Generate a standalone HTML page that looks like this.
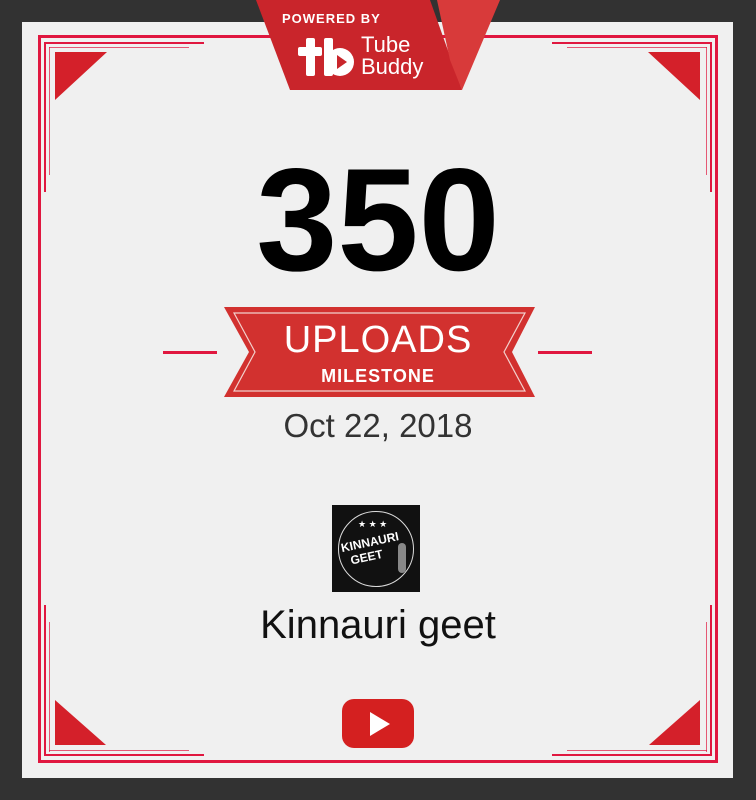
<!DOCTYPE html>
<html><head><meta charset="utf-8"><style>
body{margin:0;width:756px;height:800px;background:#323232;position:relative;overflow:hidden;font-family:"Liberation Sans",sans-serif}
.card{position:absolute;left:22px;top:22px;width:711px;height:756px;background:#f0f0f0}
.a{position:absolute;background:#e0173f}
.t{position:absolute;text-align:center;left:0;width:756px}
</style></head><body>
<div class="card"></div>
<div class="a" style="left:38px;top:35px;width:3px;height:728px"></div>
<div class="a" style="left:715px;top:35px;width:3px;height:728px"></div>
<div class="a" style="left:38px;top:35px;width:680px;height:3px"></div>
<div class="a" style="left:38px;top:760px;width:680px;height:3px"></div>
<div class="a" style="left:44px;top:42px;width:2px;height:150px"></div>
<div class="a" style="left:49px;top:47px;width:1px;height:128px;opacity:.7"></div>
<div class="a" style="left:44px;top:42px;width:160px;height:2px"></div>
<div class="a" style="left:49px;top:47px;width:140px;height:1px;opacity:.7"></div>
<div class="a" style="left:710px;top:42px;width:2px;height:150px"></div>
<div class="a" style="left:706px;top:47px;width:1px;height:128px;opacity:.7"></div>
<div class="a" style="left:552px;top:42px;width:160px;height:2px"></div>
<div class="a" style="left:567px;top:47px;width:140px;height:1px;opacity:.7"></div>
<div class="a" style="left:44px;top:605px;width:2px;height:151px"></div>
<div class="a" style="left:49px;top:622px;width:1px;height:130px;opacity:.7"></div>
<div class="a" style="left:44px;top:754px;width:160px;height:2px"></div>
<div class="a" style="left:49px;top:750px;width:140px;height:1px;opacity:.7"></div>
<div class="a" style="left:710px;top:605px;width:2px;height:151px"></div>
<div class="a" style="left:706px;top:622px;width:1px;height:130px;opacity:.7"></div>
<div class="a" style="left:552px;top:754px;width:160px;height:2px"></div>
<div class="a" style="left:567px;top:750px;width:140px;height:1px;opacity:.7"></div>
<svg width="756" height="800" style="position:absolute;left:0;top:0">
<g fill="#d4202a">
<polygon points="55,52 107,52 55,100"/>
<polygon points="648,52 700,52 700,100"/>
<polygon points="55,700 55,745 106,745"/>
<polygon points="700,700 700,745 649,745"/>
</g>
<polygon points="256,0 430,0 462,90 290,90" fill="#c9252b"/>
<polygon points="437,0 500,0 462,90 450,60" fill="#d83a3a"/>
<g fill="#fff">
<rect x="306" y="38" width="9" height="38" rx="2"/>
<rect x="298" y="47" width="24" height="9" rx="2"/>
<rect x="324" y="38" width="9" height="38" rx="2"/>
<circle cx="340" cy="62" r="14"/>
</g>
<polygon points="337,55 347,62 337,69" fill="#c9252b"/>
<polygon points="224,307 535,307 512,352 535,397 224,397 249,352" fill="#d2312f"/>
<polygon points="234,313 525,313 504,352 525,391 234,391 255,352" fill="none" stroke="#f3d0cc" stroke-width="1.2"/>
<rect x="163" y="351" width="54" height="3" fill="#e0173f"/>
<rect x="538" y="351" width="54" height="3" fill="#e0173f"/>
<rect x="342" y="699" width="72" height="49" rx="12" fill="#d42020"/>
<polygon points="370,712 370,736 390,724" fill="#fff"/>
</svg>
<div style="position:absolute;left:282px;top:11px;color:#fff;font-size:13px;font-weight:bold;letter-spacing:1px">POWERED BY</div>
<div style="position:absolute;left:361px;top:34px;color:#fff;font-size:22px;line-height:22px">Tube<br>Buddy</div>
<div class="t" style="top:140px;font-size:146px;font-weight:bold;color:#000;line-height:160px">350</div>
<div class="t" style="top:319px;font-size:38px;color:#fff;line-height:42px;letter-spacing:1px">UPLOADS</div>
<div class="t" style="top:366px;font-size:18px;color:#fff;font-weight:bold;line-height:20px;letter-spacing:1px">MILESTONE</div>
<div class="t" style="top:407px;font-size:33px;color:#333;line-height:38px">Oct 22, 2018</div>
<div style="position:absolute;left:332px;top:505px;width:88px;height:87px;background:#111">
<div style="position:absolute;left:6px;top:6px;width:74px;height:74px;border:1px solid #ddd;border-radius:50%"></div>
<div style="position:absolute;left:26px;top:14px;color:#fff;font-size:9px">★ ★ ★</div>
<div style="position:absolute;left:10px;top:30px;color:#fff;font-size:12px;font-weight:bold;transform:rotate(-12deg)">KINNAURI<br>&nbsp;&nbsp;GEET</div>
<div style="position:absolute;left:66px;top:38px;width:8px;height:30px;background:#888;border-radius:4px"></div>
</div>
<div class="t" style="top:603px;font-size:40px;color:#111;line-height:44px">Kinnauri geet</div>
</body></html>
